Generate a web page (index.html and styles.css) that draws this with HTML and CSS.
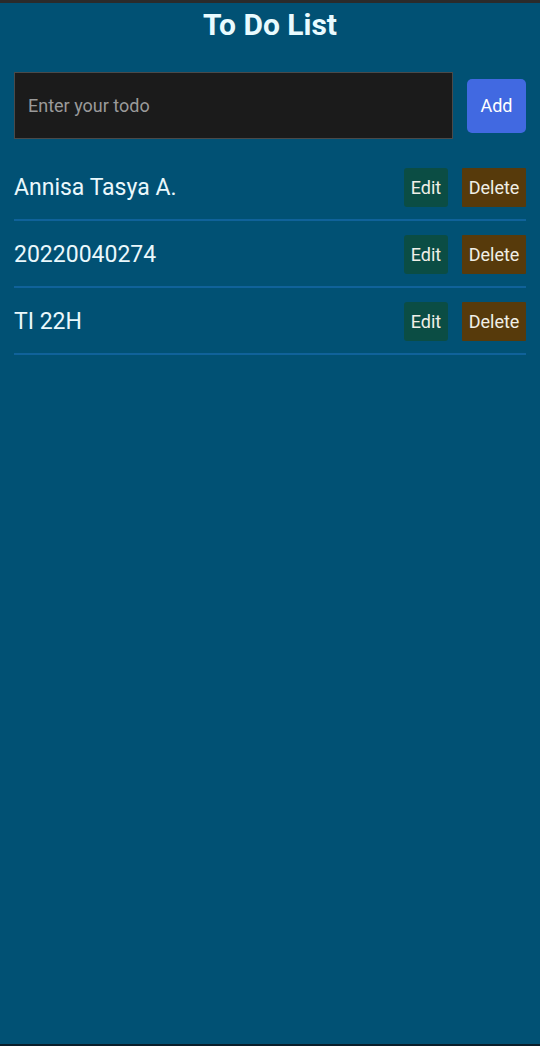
FILE: index.html
```html
<!DOCTYPE html>
<html>
<head>
<meta charset="utf-8">
<link rel="stylesheet" href="styles.css">
</head>
<body>
<div class="app">
  <h1 class="title">To Do List</h1>
  <div class="form">
    <input class="input" type="text" placeholder="Enter your todo">
    <button class="btn-add">Add</button>
  </div>
  <ul class="list">
    <li class="item"><span class="text">Annisa Tasya A.</span><div class="actions"><button class="btn-edit">Edit</button><button class="btn-delete">Delete</button></div></li>
    <li class="item"><span class="text">20220040274</span><div class="actions"><button class="btn-edit">Edit</button><button class="btn-delete">Delete</button></div></li>
    <li class="item"><span class="text">TI 22H</span><div class="actions"><button class="btn-edit">Edit</button><button class="btn-delete">Delete</button></div></li>
  </ul>
</div>
</body>
</html>
```

FILE: styles.css
```css
* { box-sizing: border-box; }
html, body { margin: 0; height: 100%; }
body {
  background: #015174;
  border-top: 3px solid #2b2b2b;
  border-bottom: 2px solid #0a1e2a;
  font-family: Roboto, "Noto Sans", sans-serif;
  color: #eaf8fc;
}
.app { padding: 0 14px; }
.title {
  margin: 0;
  text-align: center;
  font-size: 30px;
  font-weight: 700;
  line-height: 44px;
  height: 45px;
  color: #e9fbff;
}
.form {
  display: flex;
  align-items: center;
  gap: 14px;
  margin-top: 24px;
}
.input {
  flex: 1;
  height: 67px;
  background: #1b1b1b;
  border: 1px solid #4a4a4a;
  padding: 0 13px;
  font-family: Roboto, sans-serif;
  font-size: 18px;
  color: #ddd;
  outline: none;
}
.input::placeholder { color: #9a9a9a; }
.btn-add {
  width: 59px;
  height: 54px;
  background: #4169e1;
  border: none;
  border-radius: 5px;
  color: #fff;
  font-family: Roboto, sans-serif;
  font-size: 18px;
  padding: 0;
}
.list { list-style: none; margin: 15px 0 0; padding: 0; }
.item {
  display: flex;
  align-items: center;
  justify-content: space-between;
  padding: 14px 0 12px;
  border-bottom: 2px solid #10629a;
}
.text { font-size: 23px; }
.actions { display: flex; gap: 14px; }
.actions button {
  height: 39px;
  border: none;
  color: #f0efe6;
  font-family: Roboto, sans-serif;
  font-size: 18px;
  padding: 0;
}
.btn-edit { width: 44px; background: #0b4d44; border-radius: 3px; }
.btn-delete { width: 64px; background: #573a0b; border-radius: 1px; }
```
